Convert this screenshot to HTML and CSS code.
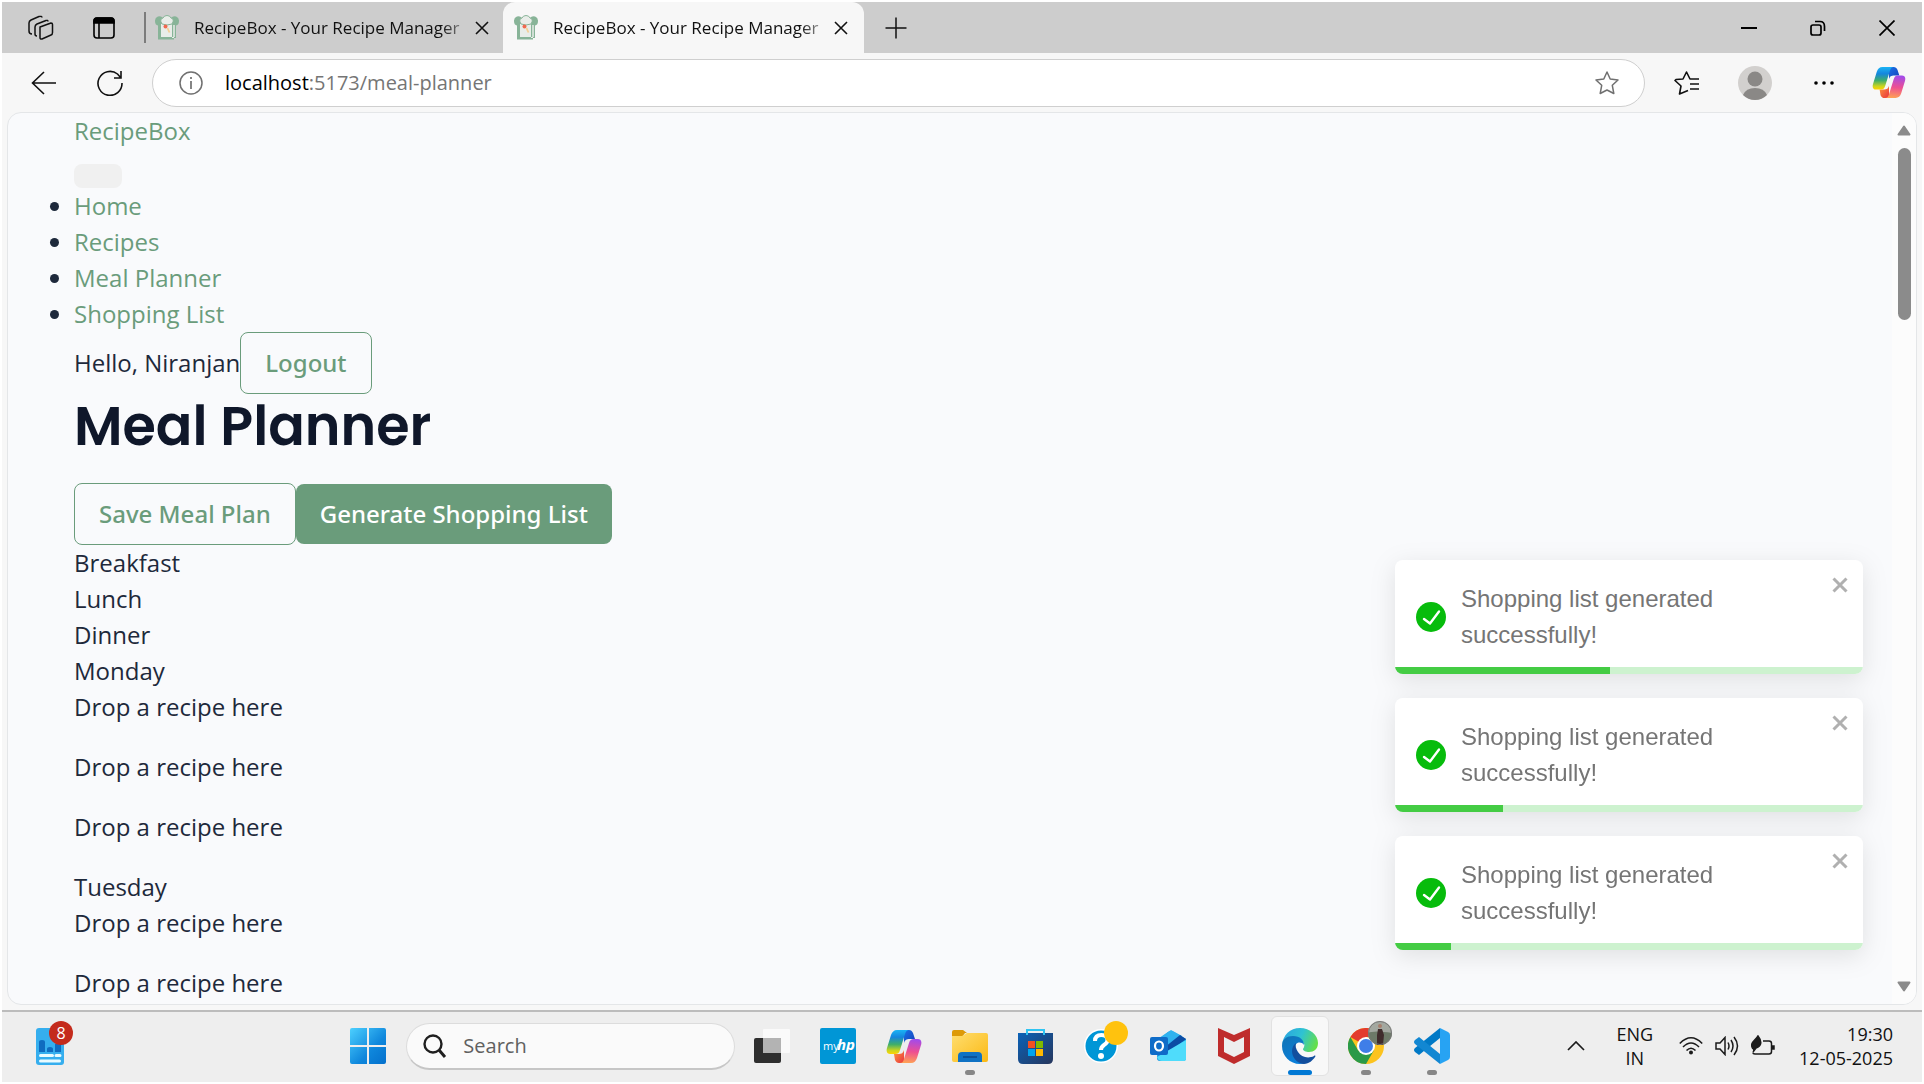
FILE: index.html
```html
<!DOCTYPE html>
<html lang="en">
<head>
<meta charset="utf-8">
<meta name="viewport" content="width=device-width, initial-scale=1">
<title>RecipeBox - Your Recipe Manager</title>
<link rel="stylesheet" href="styles.css">
</head>
<body>
<svg class="defs" aria-hidden="true">
  <defs>
    <linearGradient id="cp-a" x1="0" y1="0" x2="0" y2="1"><stop offset="0" stop-color="#1ab4f5"/><stop offset=".3" stop-color="#1586dd"/><stop offset=".6" stop-color="#3fae6a"/><stop offset=".85" stop-color="#c9d420"/><stop offset="1" stop-color="#ffd400"/></linearGradient>
    <linearGradient id="cp-b" x1=".3" y1="0" x2=".2" y2="1"><stop offset="0" stop-color="#a44be8"/><stop offset=".5" stop-color="#ee4f92"/><stop offset="1" stop-color="#ffa552"/></linearGradient>
    <linearGradient id="cp-c" x1="0" y1="0" x2="1" y2="1"><stop offset="0" stop-color="#1a72e8"/><stop offset="1" stop-color="#1440b8"/></linearGradient>
    <linearGradient id="cp-d" x1="0" y1="0" x2="1" y2="1"><stop offset="0" stop-color="#ff9a3c"/><stop offset="1" stop-color="#e8353f"/></linearGradient>
    <linearGradient id="win" x1="0" y1="0" x2="1" y2="1"><stop offset="0" stop-color="#4cd0ff"/><stop offset=".6" stop-color="#0f87dc"/><stop offset="1" stop-color="#0470cc"/></linearGradient>
    <linearGradient id="fold" x1="0" y1="0" x2="1" y2="1"><stop offset="0" stop-color="#ffde70"/><stop offset="1" stop-color="#fbb914"/></linearGradient>
    <linearGradient id="store" x1="0" y1="0" x2="1" y2="1"><stop offset="0" stop-color="#0a62b8"/><stop offset="1" stop-color="#27365c"/></linearGradient>
    <linearGradient id="edge-a" x1="0" y1=".3" x2="1" y2=".6"><stop offset="0" stop-color="#2aa5e0"/><stop offset=".5" stop-color="#2fc3d2"/><stop offset="1" stop-color="#66e045"/></linearGradient>
    <linearGradient id="edge-b" x1="0" y1="0" x2=".6" y2="1"><stop offset="0" stop-color="#1173b4"/><stop offset="1" stop-color="#0a80dc"/></linearGradient>
    <symbol id="i-copilot" viewBox="0 0 36 33">
      <path d="M18 0h5c2 0 3 1 4 3l2 6h-5c-4 0-5 1-6 4z" fill="url(#cp-c)"/>
      <path d="M18 33h-5c-2 0-3-1-4-3l-1-6h4c4 0 5-1 6-4z" fill="url(#cp-d)"/>
      <path d="M11 0h12c-2 0-3 1-4 4l-5 16c-1 3-2 4-5 4H4c-3 0-4-3-3-6L5 5c1-3 3-5 6-5z" fill="url(#cp-a)"/>
      <path d="M25 33H14c2 0 3-1 4-4l5-16c1-3 2-4 5-4h4c3 0 4 3 3 6l-4 13c-1 3-3 5-6 5z" fill="url(#cp-b)"/>
    </symbol>
    <symbol id="i-chef" viewBox="0 0 24 25">
      <path d="M5 9h14v14H5z" fill="#e9ede9"/>
      <path d="M0 6a4.500 4.500 0 0 1 8-3 6 6 0 0 0-1 6H6v13h13v2.500H3V10.500Q0 10 0 6zM24 6a4.500 4.500 0 0 0-8-3 6 6 0 0 1 1 6v14h4V10.500Q24 10 24 6z" fill="#88b498"/>
      <path d="M7 9Q4 4 8 3q1-2.500 4-2.500T16 3q4 1 1 6-5 2-10 0z" fill="#e9ede9" stroke="#88b498"/>
      <path d="M19 10v12" stroke="#e9ede9" stroke-width="1.500" fill="none"/>
      <circle cx="10.500" cy="11.500" r="2" fill="#f06a50"/><path d="m12.500 13 2 4.500" stroke="#f5cf94" stroke-width="1.800"/>
    </symbol>
    <symbol id="i-x" viewBox="0 0 14 14"><path d="m1 1 12 12M13 1 1 13" fill="none" stroke="currentColor" stroke-width="1.6"/></symbol>
    <symbol id="i-check" viewBox="0 0 30 30"><circle cx="15" cy="15" r="15" fill="#07bc0c"/><path d="m8 17 6 4.500L23 9.500" fill="none" stroke="#fff" stroke-width="2.400" stroke-linecap="round" stroke-linejoin="round"/></symbol>
    <symbol id="i-close" viewBox="0 0 16 16"><path d="m1.500 1.500 13 13m0-13-13 13" stroke="#b0b0b0" stroke-width="3"/></symbol>
  </defs>
</svg>

<header class="titlebar">
  <div class="title-tools">
    <button class="icon-btn" aria-label="Workspaces"><svg width="26" height="26" viewBox="0 0 26 26" fill="none" stroke="#111" stroke-width="1.500" stroke-linejoin="round"><path d="m12 12 11-4q1.500 0 1.500 1.500v8q0 2-1.500 2.500l-9 4q-2 .5-2-1.500z"/><path d="M9 21q-2 0-2-2v-7q0-2 2-3l9-3.500q2-.5 2 1"/><path d="M4 19q-3 0-3-3V8q0-2 2-3l8-3.500Q14 1 14 2.500"/></svg></button>
    <button class="icon-btn" aria-label="Tab actions"><svg width="22" height="22" viewBox="0 0 22 22" fill="none" stroke="#000" stroke-width="1.600"><rect x="1" y="1" width="20" height="20" rx="3"/><path d="M1 6V4q0-3 3-3h14q3 0 3 3v2z" fill="#000"/><path d="M6 6v15"/></svg></button>
  </div>
  <div class="tab">
    <svg class="favicon"><use href="#i-chef"/></svg>
    <span class="tab-title">RecipeBox - Your Recipe Manager</span>
    <button class="tab-close" aria-label="Close tab"><svg><use href="#i-x"/></svg></button>
  </div>
  <div class="tab active">
    <svg class="favicon"><use href="#i-chef"/></svg>
    <span class="tab-title">RecipeBox - Your Recipe Manager</span>
    <button class="tab-close" aria-label="Close tab"><svg><use href="#i-x"/></svg></button>
  </div>
  <button class="new-tab" aria-label="New tab"><svg width="22" height="22" viewBox="0 0 22 22" stroke="#111" stroke-width="1.500"><path d="M11 .5v21M.5 11h21"/></svg></button>
  <div class="window-controls">
    <button aria-label="Minimize"><svg width="16" height="16" viewBox="0 0 16 16" stroke="#000" stroke-width="2"><path d="M0 8h16"/></svg></button>
    <button aria-label="Restore"><svg width="16" height="16" viewBox="0 0 16 16" fill="none" stroke="#000" stroke-width="1.700"><rect x="1" y="5" width="10" height="10" rx="2"/><path d="M5 1.500h5q4.500 0 4.500 5V11"/></svg></button>
    <button aria-label="Close"><svg width="16" height="16" viewBox="0 0 16 16" stroke="#000" stroke-width="1.700"><path d="m.5.500 15 15m0-15-15 15"/></svg></button>
  </div>
</header>

<div class="toolbar">
  <button class="icon-btn" aria-label="Back"><svg width="26" height="26" viewBox="0 0 26 26" fill="none" stroke="#111" stroke-width="1.600"><path d="M25 13H1.500M13 2 1.500 13 13 24"/></svg></button>
  <button class="icon-btn reload" aria-label="Refresh"><svg width="26" height="26" viewBox="0 0 26 26" fill="none" stroke="#111" stroke-width="1.600"><path d="M25 13A12 12 0 1 1 20.500 4L24 8M24 1v7h-7"/></svg></button>
  <div class="address">
    <svg width="24" height="24" viewBox="0 0 24 24" fill="none" stroke="#707070" stroke-width="1.500"><circle cx="12" cy="12" r="11"/><path d="M12 10v8M12 6v2" stroke-width="1.700"/></svg>
    <span class="url"><b>localhost</b>:5173/meal-planner</span>
    <button class="icon-btn" aria-label="Add to favorites"><svg width="24" height="24" viewBox="0 0 24 24" fill="none" stroke="#707070" stroke-width="1.500" stroke-linejoin="round"><path d="m12 1 3.200 7 7.800 1-5.700 5.300 1.500 8.200L12 19l-6.800 3.500 1.500-8.200L1 9l7.800-1z"/></svg></button>
  </div>
  <div class="toolbar-tools">
    <button class="icon-btn" aria-label="Favorites"><svg width="26" height="24" viewBox="0 0 26 24" fill="none" stroke="#111" stroke-width="1.600" stroke-linejoin="round"><path d="M14 19.500 5.500 23 7 15 1 9.500 2 8.500 9 8l3.500-7L16 8h9M16 13h9M16 18h9"/></svg></button>
    <button class="icon-btn" aria-label="Profile"><svg width="34" height="34" viewBox="0 0 34 34"><circle cx="17" cy="17" r="17" fill="#d2d0ce"/><circle cx="17" cy="13" r="7.500" fill="#8a8886"/><path d="M5 29q3-7 12-7t12 7a17 17 0 0 1-24 0z" fill="#8a8886"/></svg></button>
    <button class="icon-btn" aria-label="Settings and more"><svg width="24" height="4" viewBox="0 0 24 4"><circle cx="6" cy="2" r="1.800"/><circle cx="14" cy="2" r="1.800"/><circle cx="22" cy="2" r="1.800"/></svg></button>
    <button class="icon-btn" aria-label="Copilot"><svg width="34" height="31"><use href="#i-copilot"/></svg></button>
  </div>
</div>

<div class="viewport">
  <main class="page">
    <nav class="nav">
      <a class="brand" href="#">RecipeBox</a>
      <button class="toggler" aria-label="Toggle navigation"></button>
      <ul class="links">
        <li><a href="#">Home</a></li>
        <li><a href="#">Recipes</a></li>
        <li><a href="#">Meal Planner</a></li>
        <li><a href="#">Shopping List</a></li>
      </ul>
      <div class="row"><span>Hello, Niranjan</span><button class="btn outline">Logout</button></div>
    </nav>
    <h1>Meal Planner</h1>
    <div class="row"><button class="btn outline">Save Meal Plan</button><button class="btn solid">Generate Shopping List</button></div>
    <div>Breakfast</div>
    <div>Lunch</div>
    <div>Dinner</div>
    <div>Monday</div>
    <p>Drop a recipe here</p>
    <p>Drop a recipe here</p>
    <p>Drop a recipe here</p>
    <div>Tuesday</div>
    <p>Drop a recipe here</p>
    <p>Drop a recipe here</p>
  </main>
  <div class="scrollbar">
    <svg width="14" height="11" viewBox="0 0 14 11"><path d="M7 1.500 12.500 9.500h-11z" fill="#8b8b8b" stroke="#8b8b8b" stroke-width="2" stroke-linejoin="round"/></svg>
    <div class="track"><div class="thumb"></div></div>
    <svg width="14" height="11" viewBox="0 0 14 11"><path d="M7 9.500 12.500 1.500h-11z" fill="#8b8b8b" stroke="#8b8b8b" stroke-width="2" stroke-linejoin="round"/></svg>
  </div>
  <div class="toasts" role="status">
    <div class="toast"><svg class="check"><use href="#i-check"/></svg><span class="message">Shopping list generated successfully!</span><button class="dismiss" aria-label="Dismiss"><svg><use href="#i-close"/></svg></button><div class="progress"><div class="bar" style="width:46%"></div></div></div>
    <div class="toast"><svg class="check"><use href="#i-check"/></svg><span class="message">Shopping list generated successfully!</span><button class="dismiss" aria-label="Dismiss"><svg><use href="#i-close"/></svg></button><div class="progress"><div class="bar" style="width:23%"></div></div></div>
    <div class="toast"><svg class="check"><use href="#i-check"/></svg><span class="message">Shopping list generated successfully!</span><button class="dismiss" aria-label="Dismiss"><svg><use href="#i-close"/></svg></button><div class="progress"><div class="bar" style="width:12%"></div></div></div>
  </div>
</div>

<footer class="taskbar">
  <div class="widgets">
    <button class="widget" aria-label="Widgets"><svg width="28" height="37" viewBox="0 0 28 37"><rect width="28" height="37" rx="3" fill="#35aeee"/><path d="M3 14q0-2 3-2t3 2v10H3zM11 21q0-2 3-2t3 2v3h-6zM19 16h6v8h-6z" fill="#0f6cc0"/><path d="M4.500 27.500h12M20 27.500h4M4.500 33h19" stroke="#e9fbff" stroke-width="3" stroke-linecap="round"/></svg><span class="badge">8</span></button>
  </div>
  <div class="apps">
    <button class="app" aria-label="Start"><svg width="36" height="36" viewBox="0 0 36 36"><path d="M2 0h15v17H0V2q0-2 2-2zM19 0h15q2 0 2 2v15H19zM0 19h17v17H2q-2 0-2-2zM19 19h17v15q0 2-2 2H19z" fill="url(#win)"/></svg></button>
    <label class="search"><svg width="24" height="24" viewBox="0 0 24 24" fill="none" stroke="#1f1f1f" stroke-width="2.400"><circle cx="10" cy="10" r="8.500"/><path d="m16 16 6 7" stroke-width="3"/></svg><input type="text" placeholder="Search" aria-label="Search"></label>
    <button class="app" aria-label="Task view"><svg width="36" height="36" viewBox="0 0 36 36"><rect y="10" width="27" height="25" rx="2" fill="#2e2e2e"/><rect x="9" y="1" width="27" height="24" rx="1" fill="#fafafa"/><path d="M9 10h18v15H9z" fill="#b3b3b3"/></svg></button>
    <button class="app" aria-label="myHP"><svg width="36" height="36" viewBox="0 0 36 36"><rect width="36" height="36" rx="2" fill="#0096d6"/><text x="3" y="22" class="my">my</text><text x="17" y="22" class="hp">hp</text></svg></button>
    <button class="app" aria-label="Copilot"><svg width="36" height="33"><use href="#i-copilot"/></svg></button>
    <button class="app running" aria-label="File Explorer"><svg width="36" height="36" viewBox="0 0 36 36"><path d="M0 4q0-2 2-2h9l4 3h-2l-3 4H0z" fill="#dd9a07"/><path d="M0 8h10l5-3h19q2 0 2 2v25q0 2-2 2H2q-2 0-2-2z" fill="url(#fold)"/><path d="M6 34V28q0-4 4-4h16q4 0 4 4v6z" fill="#0f72c4"/><path d="M11 29h14" stroke="#0a488c" stroke-width="1.500"/></svg></button>
    <button class="app" aria-label="Microsoft Store"><svg width="36" height="36" viewBox="0 0 36 36"><path d="M0 5h35v26q0 5-5 5H5q-5 0-5-5z" fill="url(#store)"/><path d="M9 7V2h17v5" fill="none" stroke="#2fc4f2" stroke-width="2"/><path d="M10 13h7v7h-7z" fill="#f25022"/><path d="M18 13h7v7h-7z" fill="#7fba00"/><path d="M10 21h7v7h-7z" fill="#00a4ef"/><path d="M18 21h7v7h-7z" fill="#ffb900"/></svg></button>
    <button class="app" aria-label="HP Support Assistant"><svg width="36" height="36" viewBox="0 0 36 36"><circle cx="17" cy="18" r="17" fill="#fff"/><circle cx="17" cy="18" r="15.500" fill="#0096d6"/><path d="M11 13q0-6 6.500-6 6 0 6 5 0 3-3.500 5-3 2-3 5" fill="none" stroke="#fff" stroke-width="4"/><circle cx="17" cy="28" r="3" fill="#fff"/></svg><span class="alert"></span></button>
    <button class="app" aria-label="Outlook"><svg width="36" height="36" viewBox="0 0 36 36"><path d="m8 12 10-8q3-2 6 0l12 7v19q0 3-3 3H10q-3 0-3-3z" fill="#1490df"/><path d="m9 10 12-8 11 6-15 12z" fill="#2fb2ef"/><path d="m15 19 15-12 6 4-18 14z" fill="#0b4ca4"/><path d="M36 12v19q0 2-3 2H12q-4 0-5-4z" fill="#4fdcfb"/><rect y="9" width="18" height="18" rx="2" fill="#0f6cc8"/><ellipse cx="9" cy="18" rx="4" ry="4.500" fill="none" stroke="#fff" stroke-width="2.200"/></svg></button>
    <button class="app" aria-label="McAfee"><svg width="36" height="36" viewBox="0 0 36 36"><path d="m2 0 16 7 16-7v28l-16 8-16-8zM8 9v15l10 5 10-5V9l-10 5z" fill="#bf2c2c"/></svg></button>
    <button class="app running current" aria-label="Microsoft Edge"><svg width="36" height="36" viewBox="0 0 36 36"><path d="M0 17C1 7 8 0 18 0s18 7 18 15c0 6-4 9-9 9-3 0-6-1-6-3 3-4 1-8-4-8C10 6 2 10 0 17z" fill="url(#edge-a)"/><path d="M0 18C0 11 5 8 11 8c7 0 11 4 11 9-3-4-9-3-9 3 0 8 6 15 12 14-3 1-5 2-7 2C8 36 0 28 0 18z" fill="url(#edge-b)"/><path d="M14 15c-8 6-3 20 8 21 5 0 9-4 11-7 1-1 0-2-1-1-6 3-13 1-16-4-2-3-3-6-2-9z" fill="#124f9e"/></svg></button>
    <button class="app running" aria-label="Google Chrome"><svg width="36" height="36" viewBox="0 0 36 36"><circle cx="18" cy="18" r="18" fill="#fcc31e"/><path d="M18 18 2.400 9A18 18 0 0 1 33.600 9H18z" fill="#e33b2e"/><path d="M2.400 9A18 18 0 0 0 18 36l7.800-13.500L10.200 22.500z" fill="#2a9a48"/><circle cx="18" cy="18" r="9" fill="#fff"/><circle cx="18" cy="18" r="7" fill="#3f7ee8"/></svg><span class="photo"><svg width="24" height="24" viewBox="0 0 24 24"><circle cx="12" cy="12" r="12" fill="#a3a8a0"/><path d="M0 12q6-3 24 0a12 12 0 0 1-24 0z" fill="#6d7a68"/><path d="M9 24V14l1-6h4l2 6-1 10z" fill="#402c2c"/><circle cx="12" cy="5" r="2" fill="#a77f6d"/><circle cx="12" cy="12" r="11.500" fill="none" stroke="#777"/></svg></span></button>
    <button class="app running" aria-label="Visual Studio Code"><svg width="36" height="36" viewBox="0 0 36 36"><path d="M26 0v10L5 27l-4-3q-2-2 0-4z" fill="#0079c6"/><path d="M26 36V26L5 9l-4 3q-2 2 0 4z" fill="#1287d2"/><path d="m26 0 8 4q2 1 2 3v22q0 2-2 3l-8 4z" fill="#27a3f3"/></svg></button>
  </div>
  <div class="tray">
    <button class="icon-btn" aria-label="Show hidden icons"><svg width="18" height="10" viewBox="0 0 18 10" fill="none" stroke="#1b1b1b" stroke-width="1.700"><path d="m1 9 8-8 8 8"/></svg></button>
    <div class="lang">ENG<br>IN</div>
    <div class="status">
      <svg width="24" height="20" viewBox="0 0 24 20" fill="none" stroke="#1b1b1b" stroke-width="1.600"><path d="M.8 7.500Q12-4 23.200 7.500M4 11q8-8 16 0M7.500 14.500q4.500-4.500 9 0"/><circle cx="12" cy="16.500" r="2" fill="#1b1b1b" stroke="none"/></svg>
      <svg width="24" height="20" viewBox="0 0 24 20" fill="none" stroke="#1b1b1b" stroke-width="1.500"><path d="M1 7h4l5-5.500v17L5 13H1zM13 6.500q2 3.500 0 7M16 4q4 6 0 12M19 1q7 9 0 18"/></svg>
      <svg width="24" height="22" viewBox="0 0 24 22" fill="none" stroke="#1b1b1b" stroke-width="1.500"><path d="M12 6h6q2.500 0 2.500 2.500v8q0 2.500-2.500 2.500H4q-2 0-2-1.500"/><path d="M21 11h2v3h-2z" fill="#1b1b1b"/><path d="M2 14C-2 8 4 6 7 1c4 5 4 10-2 12l-3 4" fill="#1b1b1b"/></svg>
    </div>
    <div class="clock">19:30<br>12-05-2025</div>
  </div>
</footer>
</body>
</html>
```
FILE: styles.css
```css
* { box-sizing: border-box; }
body {
  margin: 0;
  height: 100vh;
  display: flex;
  flex-direction: column;
  overflow: hidden;
  border: 2px solid #fff;
  background: #f7f7f7;
  font-family: "Segoe UI", "Open Sans", sans-serif;
  color: #111;
}
button { font: inherit; color: inherit; border: 0; padding: 0; background: none; }
svg { display: block; flex: none; }
a { color: #6a9c7b; text-decoration: none; }
.defs { position: absolute; width: 0; height: 0; }
.icon-btn { display: flex; align-items: center; justify-content: center; }

/* Title bar and tabs */
.titlebar {
  flex: none;
  display: flex;
  align-items: center;
  height: 51px;
  background: #cdcdcd;
}
.title-tools { display: flex; gap: 39px; padding: 0 29px 0 26px; border-right: 2px solid #7c7c7c; height: 31px; }
.tab { display: flex; align-items: center; width: 357px; height: 51px; padding: 0 14px 0 9px; }
.tab.active { width: 361px; padding: 0 16px 0 11px; background: #f7f7f7; border-radius: 12px 12px 0 0; }
.favicon { width: 24px; height: 25px; margin-right: 15px; }
.tab-title {
  flex: 1;
  white-space: nowrap;
  font-size: 17px;
  mask-image: linear-gradient(90deg, #000 88%, transparent);
}
.tab-close svg { width: 14px; height: 14px; }
.new-tab { margin-left: 21px; }
.window-controls { display: flex; gap: 53px; margin-left: auto; padding-right: 27px; }

/* Toolbar */
.toolbar {
  flex: none;
  display: flex;
  align-items: center;
  height: 59px;
  padding: 0 16px 0 29px;
}
.reload { margin-left: 40px; }
.address {
  flex: 1;
  display: flex;
  align-items: center;
  gap: 22px;
  height: 48px;
  margin-left: 29px;
  padding: 0 25px 0 26px;
  border: 1px solid #cfcfcf;
  border-radius: 24px;
  background: #fff;
}
.url { flex: 1; font-size: 20px; color: #757575; }
.url b { font-weight: 400; color: #000; }
.toolbar-tools { display: flex; align-items: center; gap: 38px; margin-left: 29px; }

/* Web page */
.viewport {
  position: relative;
  flex: 1;
  min-height: 0;
  display: flex;
  margin: 0 5px 5px;
  overflow: hidden;
  border: 1px solid #e4e6e8;
  border-radius: 14px;
  background: #f9fafc;
}
.page {
  flex: 1;
  padding: 0 66px;
  overflow: hidden;
  font: 400 24px/36px "Open Sans", sans-serif;
  color: #1e293b;
}
.brand { display: block; margin-bottom: 15px; }
.toggler { display: block; width: 48px; height: 24px; border-radius: 8px; background: #f0f0f0; }
.links { margin: 0; padding: 0; }
.row { display: flex; align-items: center; }
.btn { padding: 12px 24px; border-radius: 8px; font-family: "Noto Sans", "Open Sans", sans-serif; font-weight: 500; }
.outline { border: 1px solid #6a9c7b; color: #6a9c7b; }
.solid { background: #6a9c7b; color: #fff; }
h1 { margin: 0 0 24px; font: 600 54px/65px Poppins, Inter, sans-serif; color: #0f172a; }
p { margin: 0 0 24px; }

.scrollbar {
  display: flex;
  flex-direction: column;
  align-items: center;
  gap: 12px;
  width: 24px;
  padding: 12px 0;
  background: #fcfcfc;
}
.track { flex: 1; }
.thumb { width: 13px; height: 21%; border-radius: 7px; background: #8b8b8b; }

/* Toasts */
.toasts {
  position: absolute;
  right: 53px;
  bottom: 54px;
  display: grid;
  gap: 24px;
  width: 468px;
  font: 24px/36px "Liberation Sans", Arial, sans-serif;
  color: #757575;
  filter: drop-shadow(0 6px 12px rgba(0, 0, 0, .1));
}
.toast {
  position: relative;
  display: flex;
  align-items: center;
  gap: 15px;
  padding: 21px;
  overflow: hidden;
  border-radius: 8px;
  background: #fff;
}
.check { width: 30px; height: 30px; }
.message { flex: 1; padding-right: 36px; }
.dismiss { position: absolute; top: 17px; right: 15px; }
.dismiss svg { width: 16px; height: 16px; }
.progress { position: absolute; left: 0; right: 0; bottom: 0; height: 7px; background: #cdf2cf; }
.bar { height: 100%; background: #44cc44; }

/* Taskbar */
.taskbar {
  flex: none;
  display: flex;
  align-items: center;
  height: 72px;
  padding-bottom: 2px;
  border-top: 2px solid #bcbcbc;
  background: #eee;
  font-size: 18px;
}
.widgets { flex: 7 1 0; padding-left: 34px; }
.widget { position: relative; display: block; }
.badge {
  position: absolute;
  top: -7px;
  left: 13px;
  width: 24px;
  height: 24px;
  border-radius: 12px;
  background: #c42b1c;
  color: #fff;
  font-size: 16px;
  line-height: 24px;
}
.apps { display: flex; align-items: center; }
.app { position: relative; display: flex; align-items: center; justify-content: center; width: 66px; height: 60px; }
.search {
  display: flex;
  align-items: center;
  gap: 14px;
  width: 329px;
  height: 47px;
  margin: 0 4px 0 5px;
  padding-left: 16px;
  border: 1px solid #dcdcdc;
  border-bottom: 2px solid #c6c6c6;
  border-radius: 24px;
  background: #fafafa;
}
.search input { flex: 1; min-width: 0; border: 0; outline: 0; background: none; font: inherit; font-size: 20px; }
.search input::placeholder { color: #606060; opacity: 1; }
.my { font: 400 11px "Open Sans", sans-serif; fill: #fff; }
.hp { font: italic 700 15px "Open Sans", sans-serif; fill: #fff; }
.running::after {
  content: "";
  position: absolute;
  left: 50%;
  bottom: 1px;
  width: 10px;
  height: 5px;
  border-radius: 3px;
  transform: translateX(-50%);
  background: #868686;
}
.current::before {
  content: "";
  position: absolute;
  inset: 0 4px;
  z-index: -1;
  border: 1px solid #e2e2e2;
  border-radius: 6px;
  background: #f8f8f8;
}
.current { z-index: 0; }
.current::after { width: 24px; background: #0078d4; }
.alert, .photo { position: absolute; top: 5px; right: 7px; width: 24px; height: 24px; border-radius: 12px; }
.alert { background: #ffc20e; }
.tray { flex: 10 1 0; display: flex; align-items: center; justify-content: flex-end; padding-right: 29px; line-height: 24px; }
.lang { margin-left: 31px; text-align: center; }
.status { display: flex; align-items: center; gap: 12px; margin: 0 24px 0 26px; }
.clock { text-align: right; }
```
